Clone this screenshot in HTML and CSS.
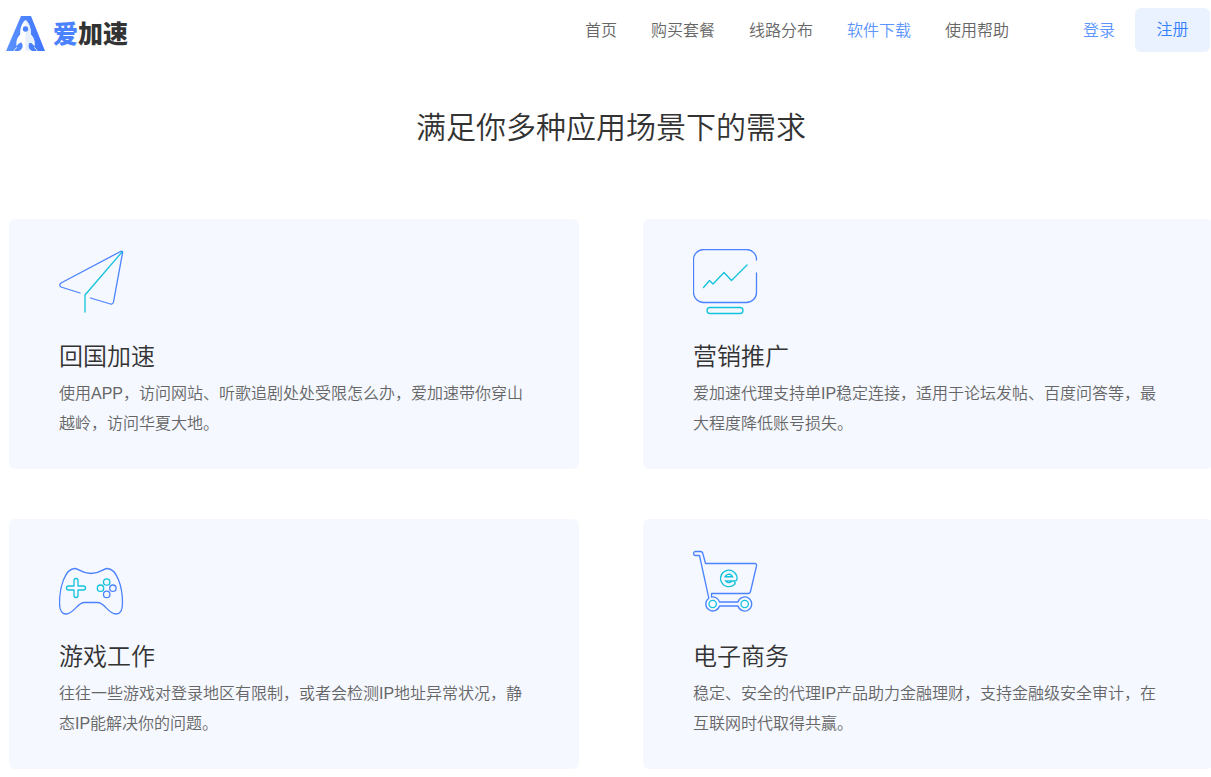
FILE: index.html
```html
<!DOCTYPE html>
<html lang="zh-CN">
<head>
<meta charset="utf-8">
<title>爱加速</title>
<link rel="stylesheet" href="styles.css">
</head>
<body>
<header class="header">
  <a class="logo" href="#">
    <svg class="logo-mark" width="39" height="35" viewBox="0 0 39 35" aria-hidden="true">
      <defs><linearGradient id="mark" x1="0" x2="1"><stop offset="0" stop-color="#5c94ff"/><stop offset="1" stop-color="#3f74ff"/></linearGradient></defs>
      <path d="M15 0H25L39 35H0Z" fill="url(#mark)"/>
      <path d="M19.500 4C15.500 7.500 14 12 14.200 18.500C11 22 10 25 10.500 30C12.500 27.500 14 26.500 15.500 26.500C17.500 29.500 17 33 13 35H26C22 33 21.500 29.500 23.500 26.500C25 26.500 26.500 27.500 28.500 30C29 25 28 22 24.800 18.500C25 12 23.500 7.500 19.500 4Z" fill="#fff"/>
      <path d="M11 31.500C9.500 32 8.500 33.500 8 35M28 31.500C29.500 32 30.500 33.500 31 35" fill="none" stroke="#fff" stroke-width=".8"/>
      <path d="M19.500 4V35H26C22 33 21.500 29.500 23.500 26.500C25 26.500 26.500 27.500 28.500 30C29 25 28 22 24.800 18.500C25 12 23.500 7.500 19.500 4Z" fill="#e6f0ff"/>
      <circle cx="19.500" cy="13" r="2.700" fill="#4b82ff"/>
    </svg>
    <span class="logo-text"><span class="logo-accent">爱</span>加速</span>
  </a>
  <nav class="nav">
    <a href="#">首页</a>
    <a href="#">购买套餐</a>
    <a href="#">线路分布</a>
    <a class="active" href="#">软件下载</a>
    <a href="#">使用帮助</a>
  </nav>
  <a class="login" href="#">登录</a>
  <button class="register" type="button">注册</button>
</header>
<main class="main">
  <h1 class="title">满足你多种应用场景下的需求</h1>
  <div class="cards">
    <section class="card">
      <svg class="icon" width="66" height="66" viewBox="0 0 66 66" aria-hidden="true">
        <path class="blue" d="M21 44L2 38Q-.5 36 2 34L61.500 2.500Q64 1.500 63.500 4L54.500 53Q54 55.500 51.500 55L31.500 49"/>
        <path class="teal" d="M63 3L26 46V63"/>
      </svg>
      <h2>回国加速</h2>
      <p>使用APP，访问网站、听歌追剧处处受限怎么办，爱加速带你穿山越岭，访问华夏大地。</p>
    </section>
    <section class="card">
      <svg class="icon" width="66" height="66" viewBox="0 0 66 66" aria-hidden="true">
        <path class="blue" d="M63.500 11A10 10 0 0 0 53.500 .5H10.500A10 10 0 0 0 .5 10.500V43.500A10 10 0 0 0 10.500 53.500H53.500A10 10 0 0 0 63.500 43.500V24"/>
        <path class="teal" d="M10.500 38.500L16.500 31.500L20 35L31 23.500L38.500 31.500L54 16"/>
        <rect class="teal" x="14" y="58.500" width="36" height="6" rx="3"/>
      </svg>
      <h2>营销推广</h2>
      <p>爱加速代理支持单IP稳定连接，适用于论坛发帖、百度问答等，最大程度降低账号损失。</p>
    </section>
    <section class="card">
      <svg class="icon" width="66" height="66" viewBox="0 0 66 66" aria-hidden="true">
        <path class="blue" d="M16 19.500C20 19.500 22 24.500 32 24.500S44 19.500 48 19.500C58 19.500 63.500 38 63.500 54C63.500 61 61 65 57 65C49 65 46 53.500 38.500 53.500H25.500C18 53.500 15 65 7 65C3 65 .5 61 .5 54C.5 38 6 19.500 16 19.500Z"/>
        <path class="teal" d="M15 37V31.500A2 2 0 0 1 19 31.500V37H24.500A2 2 0 0 1 24.500 41H19V46.500A2 2 0 0 1 15 46.500V41H9.500A2 2 0 0 1 9.500 37Z"/>
        <circle class="teal" cx="47.700" cy="33" r="3.200"/>
        <circle class="teal" cx="41.500" cy="39.200" r="3.200"/>
        <circle class="blue" cx="53.900" cy="39.200" r="3.200"/>
        <circle class="blue" cx="47.700" cy="45.400" r="3.200"/>
      </svg>
      <h2>游戏工作</h2>
      <p>往往一些游戏对登录地区有限制，或者会检测IP地址异常状况，静态IP能解决你的问题。</p>
    </section>
    <section class="card">
      <svg class="icon" width="66" height="66" viewBox="0 0 66 66" aria-hidden="true">
        <path class="blue" d="M12.500 14.500H61.500Q64 14.500 63.500 17L57.500 42.500Q57 44.500 55 44.500H18.500V48A7 7 0 0 1 26.500 53H45A7 7 0 1 1 45 57H26.500A7 7 0 1 1 15.800 49.200L6.500 6.500H2.500A2 2 0 0 1 2.500 2.500H7.500Q9.500 2.500 10 5Z"/>
        <circle class="teal" cx="19.700" cy="55" r="3.700"/>
        <circle class="teal" cx="51.700" cy="55" r="3.700"/>
        <path class="ring" d="M31 29.800H42A6.200 6.200 0 1 0 40 34"/>
        <path class="ring-core" d="M31 29.800H42A6.200 6.200 0 1 0 40 34"/>
      </svg>
      <h2>电子商务</h2>
      <p>稳定、安全的代理IP产品助力金融理财，支持金融级安全审计，在互联网时代取得共赢。</p>
    </section>
  </div>
</main>
</body>
</html>
```
FILE: styles.css
```css
* {
  box-sizing: border-box;
}

body {
  margin: 0;
  overflow-x: hidden;
  background: #fff;
  color: #666;
  font: 350 16px/30px "Liberation Sans", "Noto Sans CJK SC", sans-serif;
}

a {
  color: inherit;
  text-decoration: none;
}

.header {
  display: flex;
  align-items: center;
  padding: 8px 1px 0 6px;
}

.logo {
  display: flex;
  align-items: center;
  gap: 8px;
  margin: 6px auto 0 0;
}

.logo-mark {
  display: block;
}

.logo-text {
  padding-bottom: 2px;
  color: #333;
  font: 900 25px/33px "Noto Sans CJK SC", sans-serif;
}

.logo-accent {
  color: #4b82ff;
}

.nav {
  display: flex;
  gap: 34px;
  padding-top: 2px;
}

.nav .active,
.login {
  color: #5c95ff;
}

.login {
  margin: 0 20px 0 74px;
  padding-top: 2px;
}

.register {
  width: 75px;
  height: 44px;
  padding: 0;
  border: 0;
  border-radius: 6px;
  background: #ebf2ff;
  color: #3480ff;
  font: inherit;
}

.main {
  margin-right: -2px;
  padding: 46px 0 8px 9px;
}

.title {
  margin: 0 0 61px;
  color: #333;
  font-size: 30px;
  font-weight: 350;
  line-height: 60px;
  text-align: center;
}

.cards {
  display: grid;
  grid-template-columns: 1fr 1fr;
  gap: 50px 64px;
}

.card {
  padding: 30px 50px;
  border-radius: 6px;
  background: #f5f8ff;
}

.card h2 {
  margin: 24px 0 4px;
  color: #333;
  font-size: 24px;
  font-weight: 350;
  line-height: 36px;
}

.card p {
  margin: 0;
}

.icon {
  display: block;
  fill: none;
  stroke-width: 1.3px;
  stroke-linecap: round;
  stroke-linejoin: round;
}

.blue {
  stroke: #4b82ff;
}

.teal {
  stroke: #13c2dc;
}

.ring {
  stroke: #13c2dc;
  stroke-width: 5.4px;
}

.ring-core {
  stroke: #f5f8ff;
  stroke-width: 2.8px;
}
```
